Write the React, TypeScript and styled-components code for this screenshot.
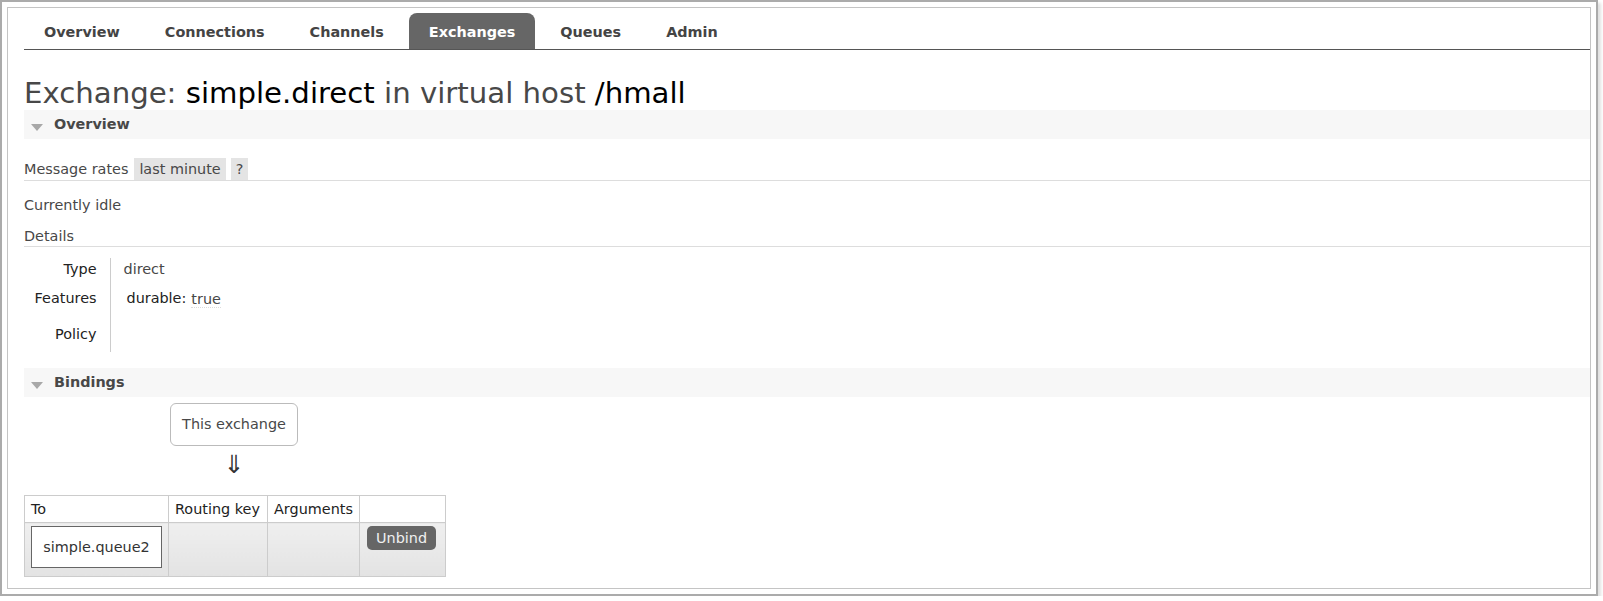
import styled, { createGlobalStyle } from 'styled-components';

const GlobalStyle = createGlobalStyle`
  html, body {
    margin: 0;
    padding: 0;
    background: #ffffff;
  }
  body {
    font-family: "DejaVu Sans", Verdana, sans-serif;
    font-size: 14.4px;
    color: #484848;
  }
`;

const tabs = ['Overview', 'Connections', 'Channels', 'Exchanges', 'Queues', 'Admin'];

export default function App() {
  return (
    <>
      <GlobalStyle />
      <Frame>
        <Page>
          <Menu>
            {tabs.map(t => (
              <Tab key={t} $selected={t === 'Exchanges'}>
                {t}
              </Tab>
            ))}
          </Menu>

          <Title>
            Exchange: <b>simple.direct</b> in virtual host <b>/hmall</b>
          </Title>

          <SectionBar>
            <Caret />
            Overview
          </SectionBar>

          <RatesRow>
            <span>Message rates</span>
            <RateChip $gap={6}>last minute</RateChip>
            <RateChip $gap={5}>?</RateChip>
          </RatesRow>
          <Idle>Currently idle</Idle>
          <SubHeading>Details</SubHeading>

          <Facts>
            <tbody>
              <tr>
                <FactLabel $h={29}>Type</FactLabel>
                <FactValue>direct</FactValue>
              </tr>
              <tr>
                <FactLabel $h={36}>Features</FactLabel>
                <FactValue>
                  <FeatureKey>durable:</FeatureKey>
                  <FeatureVal>true</FeatureVal>
                </FactValue>
              </tr>
              <tr>
                <FactLabel $h={29}>Policy</FactLabel>
                <FactValue />
              </tr>
            </tbody>
          </Facts>

          <SectionBar $top={16}>
            <Caret />
            Bindings
          </SectionBar>

          <Diagram>
            <ExchangeBox>This exchange</ExchangeBox>
            <Arrow>⇓</Arrow>
          </Diagram>

          <BindingTable>
            <thead>
              <tr>
                <Th $w={131}>To</Th>
                <Th $w={86}>Routing key</Th>
                <Th $w={79}>Arguments</Th>
                <Th $w={73}></Th>
              </tr>
            </thead>
            <tbody>
              <tr>
                <Td>
                  <QueueBox>simple.queue2</QueueBox>
                </Td>
                <Td />
                <Td />
                <Td>
                  <UnbindButton>Unbind</UnbindButton>
                </Td>
              </tr>
            </tbody>
          </BindingTable>
        </Page>
      </Frame>
    </>
  );
}

const Frame = styled.div`
  width: 1598px;
  height: 596px;
  box-sizing: border-box;
  border: 2px solid #ababab;
  padding: 5px;
  background: #fff;
  box-shadow: 3px 3px 3px rgba(0, 0, 0, 0.12);
`;

const Page = styled.div`
  height: 100%;
  box-sizing: border-box;
  border: 1px solid #c4c4c4;
  padding: 5px 0 0 16px;
`;

const Menu = styled.div`
  display: flex;
  gap: 5px;
  border-bottom: 1px solid #555;
  height: 37px;
  box-sizing: border-box;
  align-items: flex-end;
`;

const Tab = styled.div<{ $selected?: boolean }>`
  padding: 0 20px;
  height: 36px;
  line-height: 38px;
  font-weight: bold;
  font-size: 14.4px;
  color: ${p => (p.$selected ? '#ffffff' : '#444444')};
  background: ${p => (p.$selected ? '#666666' : 'transparent')};
  border-radius: 8px 8px 0 0;
`;

const Title = styled.h1`
  margin: 26px 0 0;
  font-size: 29.2px;
  font-weight: normal;
  line-height: 34px;
  color: #484848;
  white-space: nowrap;

  b {
    font-weight: normal;
    color: #000;
  }
`;

const SectionBar = styled.h2<{ $top?: number }>`
  margin: ${p => p.$top ?? 0}px 0 0;
  height: 29px;
  line-height: 29px;
  background: #f7f7f7;
  font-size: 14.4px;
  font-weight: bold;
  color: #484848;
  display: flex;
  align-items: center;
`;

const Caret = styled.span`
  width: 0;
  height: 0;
  border-left: 6px solid transparent;
  border-right: 6px solid transparent;
  border-top: 7px solid #a8a8a8;
  margin: 5px 11px 0 7px;
`;

const RatesRow = styled.div`
  margin-top: 19px;
  height: 22px;
  line-height: 22px;
  display: flex;
  align-items: stretch;
  border-bottom: 1px solid #dddddd;
`;

const RateChip = styled.span<{ $gap: number }>`
  margin-left: ${p => p.$gap}px;
  padding: 0 5px;
  background: #e4e4e4;
  color: #484848;
`;

const Idle = styled.p`
  margin: 16px 0 0;
  line-height: 17px;
`;

const SubHeading = styled.div`
  margin-top: 14px;
  line-height: 17px;
  padding-bottom: 1px;
  border-bottom: 1px solid #dddddd;
`;

const Facts = styled.table`
  margin-top: 11px;
  border-collapse: collapse;
`;

const FactLabel = styled.th<{ $h: number }>`
  width: 86px;
  height: ${p => p.$h}px;
  box-sizing: border-box;
  padding: 3px 13px 0 0;
  vertical-align: top;
  text-align: right;
  font-weight: normal;
  line-height: 17px;
  color: #222;
`;

const FactValue = styled.td`
  padding: 3px 0 0 13px;
  vertical-align: top;
  line-height: 17px;
  border-left: 1px solid #cccccc;
`;

const FeatureKey = styled.span`
  margin-left: 3px;
  color: #222;
`;

const FeatureVal = styled.span`
  margin-left: 5px;
  position: relative;
  top: 1px;
  border-bottom: 1px dotted #dcdcdc;
`;

const Diagram = styled.div`
  margin: 6px 0 0 146px;
  width: 128px;
  display: flex;
  flex-direction: column;
  align-items: center;
`;

const ExchangeBox = styled.div`
  width: 128px;
  height: 43px;
  box-sizing: border-box;
  border: 1px solid #bbbbbb;
  border-radius: 6px;
  line-height: 41px;
  text-align: center;
  color: #484848;
  white-space: nowrap;
`;

const Arrow = styled.div`
  height: 49px;
  line-height: 37px;
  font-size: 25px;
  color: #333;
`;

const BindingTable = styled.table`
  border-collapse: collapse;
  table-layout: fixed;
  width: 422px;
`;

const Th = styled.th<{ $w: number }>`
  width: ${p => p.$w}px;
  height: 26px;
  padding: 0 6px;
  border: 1px solid #cccccc;
  text-align: left;
  font-weight: normal;
  color: #222;
  background: #fff;
  white-space: nowrap;
`;

const Td = styled.td`
  height: 50px;
  padding: 3px 6px 0;
  vertical-align: top;
  border: 1px solid #cccccc;
  background: linear-gradient(#efefef, #e3e3e3);
`;

const QueueBox = styled.div`
  width: 131px;
  height: 42px;
  box-sizing: border-box;
  border: 1px solid #666666;
  background: #fff;
  line-height: 40px;
  text-align: center;
  color: #333;
  white-space: nowrap;
`;

const UnbindButton = styled.button`
  margin-left: 1px;
  height: 24px;
  padding: 0 9px;
  border: none;
  border-radius: 5px;
  background: #666666;
  color: #f0f0f0;
  font-family: "DejaVu Sans", Verdana, sans-serif;
  font-size: 14.4px;
  line-height: 22px;
  cursor: pointer;
`;
